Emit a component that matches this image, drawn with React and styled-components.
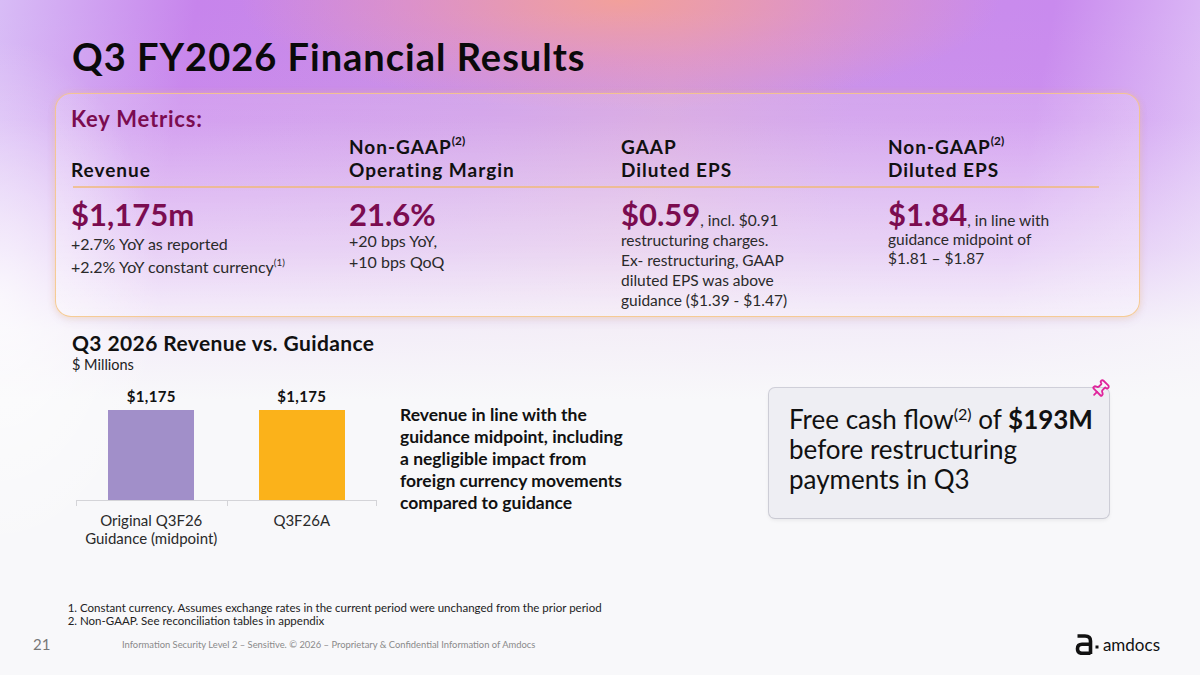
import React from 'react';
import styled, { createGlobalStyle } from 'styled-components';
import { Pin } from 'lucide-react';

const FONT = `"Lato", "Liberation Sans", sans-serif`;

const GlobalStyle = createGlobalStyle`
  html, body {
    margin: 0;
    padding: 0;
    background: #f8f8fa;
  }
  body {
    font-family: ${FONT};
  }
`;

const Slide = styled.div`
  position: relative;
  width: 1200px;
  height: 675px;
  overflow: hidden;
  display: flex;
  flex-direction: column;
  background:
    radial-gradient(ellipse 160px 260px at 0px 300px, rgba(255, 255, 255, 0.7), rgba(255, 255, 255, 0) 100%),
    linear-gradient(to bottom, rgba(248, 248, 250, 0) 0px, rgba(248, 248, 250, 0.05) 120px, rgba(248, 248, 250, 0.5) 250px, rgba(248, 248, 250, 0.9) 330px, #f8f8fa 400px),
    radial-gradient(ellipse 380px 110px at 620px 0px, rgba(242, 160, 155, 1), rgba(236, 150, 178, 0.55) 55%, rgba(236, 150, 180, 0) 100%),
    linear-gradient(100deg, #d8bcf6 0%, #c784ec 15%, #c98ee6 38%, #d096dc 52%, #c98eea 66%, #c98aee 80%, #e8d8fb 100%);
  color: #111;
`;

const Title = styled.h1`
  margin: 0;
  padding: 34px 0 0 72px;
  font: 700 38px/44px ${FONT};
  letter-spacing: 1px;
  color: #0a0a0a;
`;

const MetricsPanel = styled.section`
  margin: 15px 60px 0 55px;
  height: 224px;
  box-sizing: border-box;
  padding: 12px 40px 0 15px;
  border: 1.5px solid rgba(246, 196, 130, 0.85);
  border-radius: 16px;
  background: linear-gradient(to bottom, rgba(255, 255, 255, 0.18), rgba(255, 255, 255, 0.32));
  box-shadow: 0 0 6px rgba(250, 200, 140, 0.45), 0 4px 10px rgba(120, 90, 140, 0.08);
`;

const PanelLabel = styled.div`
  font: 700 22px/26px ${FONT};
  letter-spacing: 0.8px;
  color: #7b0c50;
`;

const MetricsGrid = styled.div`
  display: grid;
  grid-template-columns: 278px 272px 267px 1fr;
  margin-top: 3px;
`;

const HeaderCell = styled.div`
  display: flex;
  flex-direction: column;
  justify-content: flex-end;
  padding-bottom: ${(p) => p.$lift || 0}px;
  height: 46px;
  font: 700 19px/23px ${FONT};
  letter-spacing: 1px;
  color: #111;
`;

const Sup = styled.sup`
  font-size: 0.62em;
  line-height: 0;
  letter-spacing: 0;
  vertical-align: ${(p) => p.$raise || '0.75em'};
`;

const Divider = styled.div`
  grid-column: 1 / -1;
  height: 1.5px;
  margin: 2px 0 10px 2px;
  background: rgba(240, 185, 120, 0.75);
`;

const ValueCell = styled.div`
  display: flex;
  flex-direction: column;
  font: 400 ${(p) => p.$size || 15.5}px/${(p) => p.$lh || 20}px ${FONT};
  color: #2a2a2a;
`;

const Line = styled.span`
  margin-top: ${(p) => p.$gap || 0}px;
`;

const BigValue = styled.div`
  font: 700 31px/32px ${FONT};
  color: #7b0c50;
  margin-bottom: ${(p) => p.$space || 0}px;
`;

const Aside = styled.span`
  font: 400 15.5px ${FONT};
  color: #2a2a2a;
`;

const Lower = styled.div`
  display: flex;
  align-items: flex-start;
  margin-top: 14px;
  height: 270px;
`;

const ChartBlock = styled.div`
  width: 320px;
  padding-left: 72px;
`;

const ChartTitle = styled.div`
  font: 700 21px/24px ${FONT};
  letter-spacing: 0.4px;
  color: #111;
`;

const ChartUnit = styled.div`
  font: 400 14.5px/20px ${FONT};
  color: #222;
`;

const Chart = styled.div`
  margin: 12px 0 0 4px;
  width: 301px;
`;

const Plot = styled.div`
  position: relative;
  display: grid;
  grid-template-columns: 1fr 1fr;
  height: 113px;
  border-bottom: 1px solid #d4d4d8;
`;

const Tick = styled.span`
  position: absolute;
  bottom: -6px;
  left: ${(p) => p.$at};
  width: 1px;
  height: 6px;
  background: #d4d4d8;
`;

const BarSlot = styled.div`
  display: flex;
  flex-direction: column;
  align-items: center;
  justify-content: flex-end;
`;

const BarValue = styled.div`
  font: 700 15px/18px ${FONT};
  letter-spacing: 0.3px;
  color: #111;
  margin-bottom: 5px;
`;

const Bar = styled.div`
  width: 86px;
  height: ${(p) => p.$h}px;
  background: ${(p) => p.$color};
`;

const Categories = styled.div`
  display: grid;
  grid-template-columns: 1fr 1fr;
  margin-top: 10px;
`;

const Category = styled.div`
  text-align: center;
  font: 400 15px/18px ${FONT};
  color: #2a2a2a;
`;

const ChartNote = styled.p`
  margin: 73px 0 0 8px;
  width: 290px;
  font: 700 17.5px/22px ${FONT};
  color: #111;
`;

const CashCard = styled.div`
  position: relative;
  margin: 57px 0 0 79px;
  width: 340px;
  height: 130px;
  box-sizing: border-box;
  padding: 16px 8px 0 20px;
  background: #eeeef3;
  border-radius: 6px;
  box-shadow: 0 0 0 1px rgba(170, 170, 185, 0.5), 0 2px 4px rgba(0, 0, 0, 0.08);
  font: 400 26px/30px ${FONT};
  color: #111;
`;

const PinBadge = styled.span`
  position: absolute;
  top: -9px;
  right: -1px;
  display: flex;
  color: #e0259c;
  transform: rotate(45deg);
`;

const Footnotes = styled.ol`
  margin: 0;
  padding: 0 0 0 80px;
  font: 400 11.5px/13px ${FONT};
  color: #222;
`;

const Footer = styled.footer`
  display: flex;
  align-items: center;
  padding: 6px 40px 0 33px;
`;

const PageNum = styled.span`
  width: 89px;
  font: 400 15px ${FONT};
  color: #777;
`;

const Legal = styled.span`
  flex: 1;
  font: 400 9.4px ${FONT};
  color: #8a8a8a;
`;

const Logo = styled.div`
  display: flex;
  align-items: center;
  gap: 2px;
  font: 400 17px ${FONT};
  color: #111;
`;

const LogoMark = () => (
  <svg width="26" height="22" viewBox="0 0 26 22" aria-hidden="true">
    <path
      d="M2.5 3 H10 Q15.5 3 15.5 8 V21 M15.5 11.2 H7 Q2.5 11.2 2.5 15.8 Q2.5 20.3 7 20.3 H15.5"
      fill="none"
      stroke="#111"
      strokeWidth="3.6"
    />
    <rect x="20.5" y="12.5" width="3" height="3" fill="#111" />
  </svg>
);

const App = () => (
  <>
    <GlobalStyle />
    <Slide>
      <Title>Q3 FY2026 Financial Results</Title>

      <MetricsPanel>
        <PanelLabel>Key Metrics:</PanelLabel>
        <MetricsGrid>
          <HeaderCell>Revenue</HeaderCell>
          <HeaderCell>
            <span>Non-GAAP<Sup>(2)</Sup></span>
            <span>Operating Margin</span>
          </HeaderCell>
          <HeaderCell $lift={3}>
            <span>GAAP</span>
            <span>Diluted EPS</span>
          </HeaderCell>
          <HeaderCell>
            <span>Non-GAAP<Sup>(2)</Sup></span>
            <span>Diluted EPS</span>
          </HeaderCell>

          <Divider />

          <ValueCell $size={16} $lh={23}>
            <BigValue $space={2}>$1,175m</BigValue>
            <Line>+2.7% YoY as reported</Line>
            <Line>+2.2% YoY constant currency<Sup>(1)</Sup></Line>
          </ValueCell>
          <ValueCell $size={16} $lh={21}>
            <BigValue>21.6%</BigValue>
            <Line>+20 bps YoY,</Line>
            <Line>+10 bps QoQ</Line>
          </ValueCell>
          <ValueCell $lh={20}>
            <BigValue>
              $0.59<Aside>, incl. $0.91</Aside>
            </BigValue>
            <Line>restructuring charges.</Line>
            <Line>Ex- restructuring, GAAP</Line>
            <Line>diluted EPS was above</Line>
            <Line>guidance ($1.39 - $1.47)</Line>
          </ValueCell>
          <ValueCell $lh={19}>
            <BigValue>
              $1.84<Aside>, in line with</Aside>
            </BigValue>
            <Line>guidance midpoint of</Line>
            <Line>$1.81 – $1.87</Line>
          </ValueCell>
        </MetricsGrid>
      </MetricsPanel>

      <Lower>
        <ChartBlock>
          <ChartTitle>Q3 2026 Revenue vs. Guidance</ChartTitle>
          <ChartUnit>$ Millions</ChartUnit>
          <Chart>
            <Plot>
              <BarSlot>
                <BarValue>$1,175</BarValue>
                <Bar $h={90} $color="#a18fc9" />
              </BarSlot>
              <BarSlot>
                <BarValue>$1,175</BarValue>
                <Bar $h={90} $color="#fbb21a" />
              </BarSlot>
              <Tick $at="0" />
              <Tick $at="50%" />
              <Tick $at="calc(100% - 1px)" />
            </Plot>
            <Categories>
              <Category>
                Original Q3F26
                <br />
                Guidance (midpoint)
              </Category>
              <Category>Q3F26A</Category>
            </Categories>
          </Chart>
        </ChartBlock>

        <ChartNote>
          Revenue in line with the
          <br />
          guidance midpoint, including
          <br />
          a negligible impact from
          <br />
          foreign currency movements
          <br />
          compared to guidance
        </ChartNote>

        <CashCard>
          <PinBadge>
            <Pin size={20} strokeWidth={2.2} />
          </PinBadge>
          Free cash flow<Sup $raise="0.55em">(2)</Sup> of <b>$193M</b>
          <br />
          before restructuring
          <br />
          payments in Q3
        </CashCard>
      </Lower>

      <Footnotes>
        <li>Constant currency. Assumes exchange rates in the current period were unchanged from the prior period</li>
        <li>Non-GAAP. See reconciliation tables in appendix</li>
      </Footnotes>

      <Footer>
        <PageNum>21</PageNum>
        <Legal>Information Security Level 2 – Sensitive. © 2026 – Proprietary &amp; Confidential Information of Amdocs</Legal>
        <Logo>
          <LogoMark />
          amdocs
        </Logo>
      </Footer>
    </Slide>
  </>
);

export default App;
